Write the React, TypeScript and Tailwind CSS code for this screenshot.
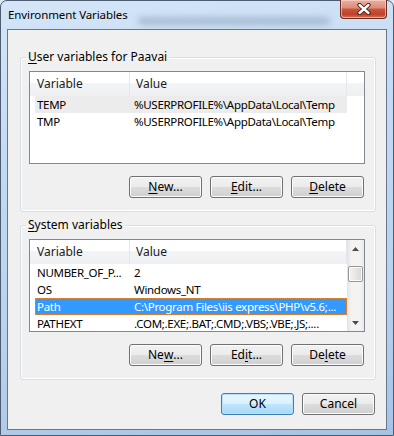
import type { ReactNode } from 'react';

type Row = { name: string; value: string };

const userRows: Row[] = [
  { name: 'TEMP', value: '%USERPROFILE%\\AppData\\Local\\Temp' },
  { name: 'TMP', value: '%USERPROFILE%\\AppData\\Local\\Temp' },
];

const systemRows: Row[] = [
  { name: 'NUMBER_OF_P...', value: '2' },
  { name: 'OS', value: 'Windows_NT' },
  { name: 'Path', value: 'C:\\Program Files\\iis express\\PHP\\v5.6;...' },
  { name: 'PATHEXT', value: '.COM;.EXE;.BAT;.CMD;.VBS;.VBE;.JS;....' },
];

function WinButton({ children, primary }: { children: ReactNode; primary?: boolean }) {
  return (
    <button
      className={
        primary
          ? 'flex h-[22px] w-[73px] items-center justify-center rounded-[3px] border border-[#3c7fb1] bg-[linear-gradient(#eaf6fd_0%,#d9f0fc_50%,#bee6fd_50%,#a7d9f5_100%)] leading-none text-black shadow-[inset_0_0_0_1px_#b6e3fb]'
          : 'flex h-[22px] w-[73px] items-center justify-center rounded-[3px] border border-[#707070] bg-[linear-gradient(#f2f2f2_0%,#ebebeb_50%,#dddddd_50%,#cfcfcf_100%)] leading-none text-black shadow-[inset_0_0_0_1px_#fcfcfc]'
      }
    >
      {children}
    </button>
  );
}

function U({ children }: { children: ReactNode }) {
  return <span className="underline decoration-1 underline-offset-[2px]">{children}</span>;
}

function Arrow({ down }: { down?: boolean }) {
  return (
    <div className="flex h-[17px] w-full items-center justify-center">
      <svg width="7" height="4" viewBox="0 0 7 4">
        {down ? <path d="M0 0h7L3.5 4z" fill="#4d4d4d" /> : <path d="M0 4h7L3.5 0z" fill="#4d4d4d" />}
      </svg>
    </div>
  );
}

function ScrollBar() {
  return (
    <div className="flex w-[17px] shrink-0 flex-col bg-[linear-gradient(to_right,#e3e3e3,#f3f3f3_25%,#f3f3f3_75%,#e9e9e9)]">
      <Arrow />
      <div className="h-[9px]" />
      <div className="mx-[1px] h-[16px] rounded-[2px] border border-[#979797] bg-[linear-gradient(to_right,#f4f4f4,#e6e6e6_50%,#d6d6d6)] shadow-[inset_0_0_0_1px_#fbfbfb]" />
      <div className="flex-1" />
      <Arrow down />
    </div>
  );
}

function VarList({ rows, scroll, active, inactive }: { rows: Row[]; scroll?: boolean; active?: number; inactive?: number }) {
  return (
    <div className="flex h-[93px] w-[336px] overflow-hidden border border-[#828790] bg-white">
      <div className="flex min-w-0 flex-1 flex-col">
        <div className="flex h-[24px] shrink-0 bg-[linear-gradient(white_0%,white_45%,#f3f4f6_45%,#eef0f2_100%)]">
          <div className="flex w-[99px] items-center pl-[7px] text-[#1c1c1c]">Variable</div>
          <div className="w-px bg-[#e3e8ee]" />
          <div className="flex w-[216px] items-center pl-[6px] text-[#1c1c1c]">Value</div>
          <div className="w-px bg-[#e3e8ee]" />
          <div className="flex-1" />
        </div>
        {rows.map((r, i) => (
          <div
            key={r.name}
            className={
              i === active
                ? 'ml-[5px] flex h-[17px] w-[312px] shrink-0 items-center overflow-hidden border border-dotted border-[#e58b33] bg-[#3399ff] text-[11.5px] tracking-[-0.3px] text-white'
                : i === inactive
                  ? 'ml-[5px] flex h-[17px] w-[312px] shrink-0 items-center overflow-hidden border border-transparent bg-[#ececec] text-[11.5px] tracking-[-0.3px] text-black'
                  : 'ml-[5px] flex h-[17px] w-[312px] shrink-0 items-center overflow-hidden border border-transparent text-[11.5px] tracking-[-0.3px] text-black'
            }
          >
            <div className="w-[98px] shrink-0 truncate pl-[1px] whitespace-nowrap">{r.name}</div>
            <div className="whitespace-nowrap">{r.value}</div>
          </div>
        ))}
      </div>
      {scroll && <ScrollBar />}
    </div>
  );
}

function GroupBox({ label, children }: { label: ReactNode; children: ReactNode }) {
  return (
    <fieldset className="ml-[12px] mr-[10px] rounded-[3px] border border-[#d5dfe5] pb-[13px] pl-[8px] pr-[10px] pt-[6px] shadow-[inset_0_0_0_1px_#ffffff]">
      <legend className="-ml-[3px] px-[2px] leading-[16px] text-black">{label}</legend>
      {children}
    </fieldset>
  );
}

export default function App() {
  return (
    <div className="h-[436px] w-[394px] bg-[#dfe9f5] font-['Noto_Sans',sans-serif] text-[12px]">
      <div className="flex h-full w-full flex-col rounded-t-[7px] border border-[#4c5c72] bg-[linear-gradient(170deg,#d4e5f7_0%,#c3d9f1_35%,#b9d1ec_70%,#a7c3e4_100%)]">
        {/* title bar */}
        <div className="flex h-[28px] shrink-0 items-start">
          <div className="pl-[7px] pt-[6px] text-[11.5px] leading-[16px] tracking-[-0.1px] text-black">Environment Variables</div>
          <div className="mx-[10px] mt-[16px] h-[8px] flex-1 rounded-full bg-[#6f86a3] opacity-40 blur-[3px]" />
          <div className="-mt-px mr-[6px] flex h-[19px] w-[47px] shrink-0 items-center justify-center rounded-b-[4px] border border-t-0 border-[#6b2b22] bg-[linear-gradient(#eab0a2_0%,#dd8a78_45%,#c9553f_50%,#c0412a_80%,#d8734f_100%)] shadow-[inset_0_0_0_1px_rgba(255,220,210,0.6)]">
            <svg width="14" height="12" viewBox="0 0 14 12">
              <path d="M2.5 2l9 8M11.5 2l-9 8" stroke="#3a1510" strokeWidth="4.2" strokeLinecap="round" />
              <path d="M2.5 2l9 8M11.5 2l-9 8" stroke="#ffffff" strokeWidth="2.4" strokeLinecap="round" />
            </svg>
          </div>
        </div>

        {/* client area */}
        <div className="mx-[6px] mb-[5px] flex flex-1 flex-col border border-[#67788e] bg-[#f0f0f0]">
          <div className="h-[19px]" />
          <GroupBox label={<><U>U</U>ser variables for Paavai</>}>
            <VarList rows={userRows} inactive={0} />
            <div className="mr-[1px] mt-[12px] flex justify-end gap-[8px]">
              <WinButton><U>N</U>ew...</WinButton>
              <WinButton><U>E</U>dit...</WinButton>
              <WinButton><U>D</U>elete</WinButton>
            </div>
          </GroupBox>
          <div className="h-[5px]" />
          <GroupBox label={<><U>S</U>ystem variables</>}>
            <VarList rows={systemRows} scroll active={2} />
            <div className="mr-[1px] mt-[12px] flex justify-end gap-[8px]">
              <WinButton>Ne<U>w</U>...</WinButton>
              <WinButton>Ed<U>i</U>t...</WinButton>
              <WinButton>De<U>l</U>ete</WinButton>
            </div>
          </GroupBox>
          <div className="mr-[11px] mt-[13px] flex justify-end gap-[8px]">
            <WinButton primary>OK</WinButton>
            <WinButton>Cancel</WinButton>
          </div>
        </div>
      </div>
    </div>
  );
}
